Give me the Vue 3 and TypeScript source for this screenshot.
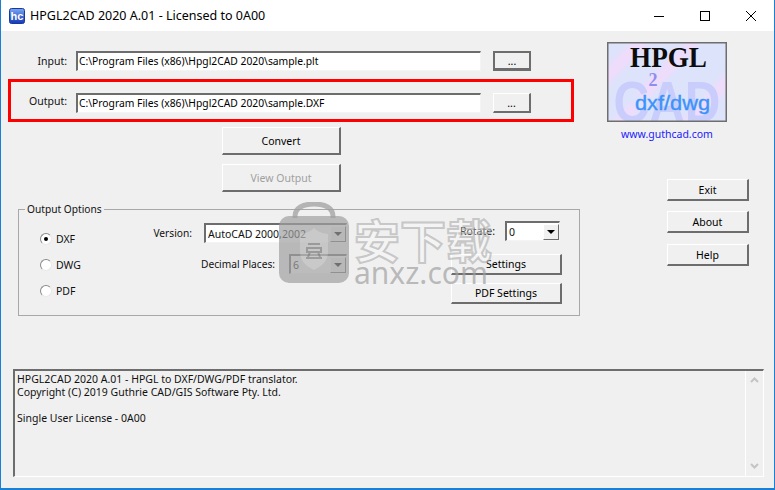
<script setup lang="ts">
const inputPath = 'C:\\Program Files (x86)\\Hpgl2CAD 2020\\sample.plt'
const outputPath = 'C:\\Program Files (x86)\\Hpgl2CAD 2020\\sample.DXF'
const formats = ['DXF', 'DWG', 'PDF']
const sideButtons = ['Exit', 'About', 'Help']
</script>

<template>
  <div class="window">
    <header class="titlebar">
      <svg class="app-icon" width="16" height="16" viewBox="0 0 16 16">
        <defs>
          <linearGradient id="ic" x1="0" y1="0" x2="0" y2="1">
            <stop offset="0" stop-color="#7aa6f2" />
            <stop offset="1" stop-color="#1238b8" />
          </linearGradient>
        </defs>
        <rect x="0.5" y="0.5" width="15" height="15" rx="2" fill="url(#ic)" stroke="#1a3a9a" />
        <text x="8" y="12" text-anchor="middle" class="ic-text">hc</text>
      </svg>
      <span class="title">HPGL2CAD 2020 A.01 - Licensed to 0A00</span>
      <div class="caption">
        <span class="cap"><svg width="10" height="10" viewBox="0 0 10 10"><path d="M0 5.5H10" stroke="#000" /></svg></span>
        <span class="cap"><svg width="10" height="10" viewBox="0 0 10 10"><rect x="0.5" y="0.5" width="9" height="9" fill="none" stroke="#000" /></svg></span>
        <span class="cap"><svg width="10" height="10" viewBox="0 0 10 10"><path d="M0 0L10 10M10 0L0 10" stroke="#000" /></svg></span>
      </div>
    </header>

    <main class="client">
      <div class="columns">
        <section class="left">
          <div class="file-row input-row">
            <label class="file-label">Input:</label>
            <div class="field">{{ inputPath }}</div>
            <button class="btn browse default">...</button>
          </div>
          <div class="file-row output-row">
            <label class="file-label">Output:</label>
            <div class="field">{{ outputPath }}</div>
            <button class="btn browse">...</button>
          </div>
          <div class="actions">
            <button class="btn action">Convert</button>
            <button class="btn action disabled">View Output</button>
          </div>

          <fieldset class="options">
            <legend>Output Options</legend>
            <div class="radios">
              <label v-for="(f, i) in formats" :key="f" class="radio">
                <span class="dot" :class="{ on: i === 0 }"></span>{{ f }}
              </label>
            </div>
            <div class="selects">
              <div class="sel-row">
                <span class="sel-label">Version:</span>
                <div class="combo wide"><span>AutoCAD 2000,2002</span><i class="arrow"></i></div>
              </div>
              <div class="sel-row">
                <span class="sel-label dec">Decimal Places:</span>
                <div class="combo small"><span>6</span><i class="arrow"></i></div>
              </div>
            </div>
            <div class="extras">
              <div class="rot-row">
                <span>Rotate:</span>
                <div class="combo rot"><span>0</span><i class="arrow"></i></div>
              </div>
              <button class="btn setting">Settings</button>
              <button class="btn setting">PDF Settings</button>
            </div>
          </fieldset>
        </section>

        <aside class="side">
          <div class="logo-block">
            <svg class="logo" width="120" height="80" viewBox="0 0 120 80">
              <defs>
                <filter id="soft" x="-10%" y="-10%" width="120%" height="120%">
                  <feGaussianBlur stdDeviation="2.5" />
                </filter>
                <clipPath id="logoClip"><rect x="1" y="1" width="118" height="78" /></clipPath>
              </defs>
              <g clip-path="url(#logoClip)">
                <rect width="120" height="80" fill="#dde3fb" />
                <g filter="url(#soft)" fill="#efdcfb">
                  <path d="M-5 30L30 -5L48 -5L-5 48Z" />
                  <path d="M30 50L85 -5L98 -5L38 60Z" />
                  <path d="M70 85L125 25L125 42L88 85Z" />
                  <path d="M0 85L22 62L34 66L14 85Z" />
                </g>
                <text x="60" y="80" text-anchor="middle" class="l-cad" textLength="107" lengthAdjust="spacingAndGlyphs">CAD</text>
                <text x="61.5" y="25" text-anchor="middle" class="l-hpgl" textLength="77" lengthAdjust="spacingAndGlyphs">HPGL</text>
                <text x="46" y="44" text-anchor="middle" class="l-two">2</text>
                <text x="65.5" y="68" text-anchor="middle" class="l-dxf" textLength="75" lengthAdjust="spacingAndGlyphs">dxf/dwg</text>
              </g>
              <rect x="0.75" y="0.75" width="118.5" height="78.5" fill="none" stroke="#6e6e6e" stroke-width="1.5" />
            </svg>
            <a class="link">www.guthcad.com</a>
          </div>
          <div class="side-buttons">
            <button v-for="b in sideButtons" :key="b" class="btn side-btn">{{ b }}</button>
          </div>
        </aside>
      </div>

      <div class="log">
        <div class="log-text">
          <div>HPGL2CAD 2020 A.01 - HPGL to DXF/DWG/PDF translator.</div>
          <div>Copyright (C) 2019 Guthrie CAD/GIS Software Pty. Ltd.</div>
          <div>&nbsp;</div>
          <div>Single User License - 0A00</div>
        </div>
        <div class="scroll">
          <svg width="9" height="6" viewBox="0 0 9 6"><path d="M1 5L4.5 1.5L8 5" fill="none" stroke="#c4c4c4" stroke-width="2" /></svg>
          <svg width="9" height="6" viewBox="0 0 9 6"><path d="M1 1L4.5 4.5L8 1" fill="none" stroke="#c4c4c4" stroke-width="2" /></svg>
        </div>
      </div>

      <div class="watermark">
        <svg class="wm-lock" width="72" height="81" viewBox="0 0 72 81">
          <path d="M17 16V14C17 6 25 2 36 2S55 6 55 14V16" fill="none" stroke="#a0a0a0" stroke-opacity="0.75" stroke-width="5" />
          <rect x="1" y="14" width="70" height="67" rx="10" fill="#a0a0a0" fill-opacity="0.7" />
          <path d="M22 32C30 31 34 28 36 26C38 28 42 31 50 32V50C50 60 42 65 36 68C30 65 22 60 22 50Z" fill="#fff" fill-opacity="0.2" />
          <path d="M30 42H42M29 46H43V50H29ZM32 50L30 55M40 50L42 55M28 56H44" fill="none" stroke="#777" stroke-opacity="0.55" stroke-width="2" />
        </svg>
        <div class="wm-text">
          <div class="wm-cn">安下载</div>
          <div class="wm-en">anxz.com</div>
        </div>
      </div>
    </main>
  </div>
</template>

<style>
html, body { margin: 0; padding: 0; background: #f0f0f0; }
</style>

<style scoped>
* { box-sizing: border-box; }
.window {
  width: 775px;
  height: 490px;
  display: flex;
  flex-direction: column;
  border: 1px solid #1a80d6;
  border-top: 0;
  border-bottom-width: 2px;
  background: #f0f0f0;
  font-family: "Noto Sans", sans-serif;
  font-size: 10.5px;
  color: #111;
  overflow: hidden;
}
.titlebar {
  height: 31px;
  flex: none;
  display: flex;
  align-items: center;
  background: #fff;
  padding-left: 8px;
}
.app-icon { flex: none; margin-right: 5px; }
.ic-text { font: bold 11px "Liberation Sans", sans-serif; fill: #fff; }
.title { font-size: 12.5px; color: #000; }
.caption { margin-left: auto; display: flex; }
.cap { width: 46px; height: 31px; display: flex; align-items: center; justify-content: center; }
.client { position: relative; flex: 1; display: flex; flex-direction: column; }
.columns { display: flex; height: 338px; flex: none; }
.left { width: 590px; flex: none; padding-top: 20px; }
.file-row { display: flex; align-items: flex-start; }
.input-row { height: 20px; }
.output-row {
  width: 566px;
  height: 43px;
  margin: 8px 0 0 7px;
  border: 3px solid #f00;
  padding-top: 11px;
}
.file-label { text-align: right; line-height: 20px; }
.input-row .file-label { width: 66px; margin-right: 9px; }
.output-row .file-label { width: 56px; margin-right: 9px; margin-top: -2px; }
.field {
  width: 405px;
  height: 20px;
  flex: none;
  background: #fff;
  border: 1px solid #f4f4f4;
  border-top: 2px solid #6d6d6d;
  border-left: 2px solid #6d6d6d;
  padding-left: 1px;
  font-size: 10.3px;
  line-height: 17px;
  white-space: nowrap;
  overflow: hidden;
  color: #000;
}
.btn {
  font: inherit;
  color: #000;
  background: #f0f0f0;
  border: 1px solid #fff;
  border-right: 2px solid #6d6d6d;
  border-bottom: 2px solid #6d6d6d;
  padding: 0;
  display: block;
}
.browse { width: 38px; height: 20px; margin-left: 12px; line-height: 14px; }
.browse.default {
  border: 2px solid #6d6d6d;
  border-bottom-width: 3px;
}
.actions { display: flex; flex-direction: column; gap: 9px; margin: 5px 0 0 221px; }
.action { width: 119px; height: 28px; }
.action.disabled { color: #a0a0a0; }
.options {
  width: 562px;
  height: 113px;
  margin: 11px 0 0 17px;
  padding: 0;
  border: 1px solid #a8a8a8;
  border-radius: 0;
  display: flex;
}
.options legend { margin-left: 6px; padding: 0 2px; line-height: 12px; font-size: 10.2px; }
.radios { display: flex; flex-direction: column; padding: 11px 0 0 21px; width: 112px; flex: none; }
.radio { height: 26px; display: flex; align-items: center; }
.dot {
  width: 12px;
  height: 12px;
  border-radius: 50%;
  background: #fff;
  border: 1px solid #8a8a8a;
  border-right-color: #e8e8e8;
  border-bottom-color: #e8e8e8;
  margin-right: 4px;
  display: flex;
  align-items: center;
  justify-content: center;
}
.dot.on::after { content: ""; width: 4px; height: 4px; border-radius: 50%; background: #000; }
.selects { width: 216px; flex: none; display: flex; flex-direction: column; gap: 11px; padding-top: 8px; }
.sel-row { display: flex; align-items: center; justify-content: flex-end; height: 20px; }
.sel-label { margin-right: 12px; font-size: 10.2px; }
.sel-label.dec { margin-right: 14px; }
.combo {
  height: 20px;
  background: #fff;
  border: 1px solid #f4f4f4;
  border-top: 2px solid #6d6d6d;
  border-left: 2px solid #6d6d6d;
  display: flex;
  align-items: center;
  justify-content: space-between;
  padding-left: 2px;
  white-space: nowrap;
}
.wide { width: 143px; }
.small { width: 58px; }
.rot { width: 55px; }
.arrow {
  width: 16px;
  height: 16px;
  flex: none;
  background: #f0f0f0;
  border: 1px solid #fff;
  border-right-color: #6d6d6d;
  border-bottom-color: #6d6d6d;
  position: relative;
  display: block;
}
.arrow::after {
  content: "";
  position: absolute;
  left: 3px;
  top: 5px;
  border: 4px solid transparent;
  border-top: 4px solid #000;
  border-bottom: 0;
}
.extras { width: 111px; margin: 0 17px 0 auto; padding-top: 6px; display: flex; flex-direction: column; }
.rot-row { display: flex; align-items: center; justify-content: flex-end; gap: 10px; height: 20px; margin-bottom: 13px; padding-right: 2px; }
.setting { width: 111px; height: 21px; margin-bottom: 8px; }
.side { flex: 1; }
.logo-block { width: 120px; margin: 11px 0 0 16px; display: flex; flex-direction: column; align-items: center; }
.logo { display: block; }
.l-hpgl { font: bold 30px "Liberation Serif", serif; fill: #0c0c0c; }
.l-two { font: bold 18px "Liberation Serif", serif; fill: #8e8ef0; }
.l-cad { font: bold 58px "Liberation Sans", sans-serif; fill: #c9cdfb; }
.l-dxf { font: 21px "Liberation Sans", sans-serif; fill: #3b93fa; stroke: #3b93fa; stroke-width: 0.4px; }
.link { color: #1a1aff; margin-top: 5px; line-height: 14px; white-space: nowrap; }
.side-buttons { display: flex; flex-direction: column; gap: 10px; margin: 38px 0 0 76px; }
.side-btn { width: 82px; height: 22px; }
.side-btn:last-child { margin-top: 1px; }
.log {
  width: 751px;
  height: 108px;
  margin: 0 0 0 12px;
  flex: none;
  display: flex;
  border: 1px solid #fff;
  border-top: 2px solid #6d6d6d;
  border-left: 2px solid #6d6d6d;
}
.log-text { flex: 1; padding: 2px 2px; line-height: 13px; color: #111; }
.scroll {
  width: 18px;
  border-left: 1px solid #fff;
  display: flex;
  flex-direction: column;
  justify-content: space-between;
  align-items: center;
  padding: 6px 0 7px;
}
.watermark {
  position: absolute;
  left: 277px;
  top: 171px;
  display: flex;
  gap: 4px;
  pointer-events: none;
}
.wm-text { font-family: "Noto Sans CJK SC", sans-serif; margin-top: 12px; }
.wm-cn {
  font-size: 46px;
  line-height: 48px;
  font-weight: 700;
  color: rgba(255, 255, 255, 0.3);
  -webkit-text-stroke: 2px rgba(175, 175, 175, 0.65);
  white-space: nowrap;
}
.wm-en {
  font-size: 30px;
  line-height: 28px;
  margin-top: -3px;
  font-family: "Noto Sans", sans-serif;
  color: rgba(160, 160, 160, 0.7);
}
</style>
